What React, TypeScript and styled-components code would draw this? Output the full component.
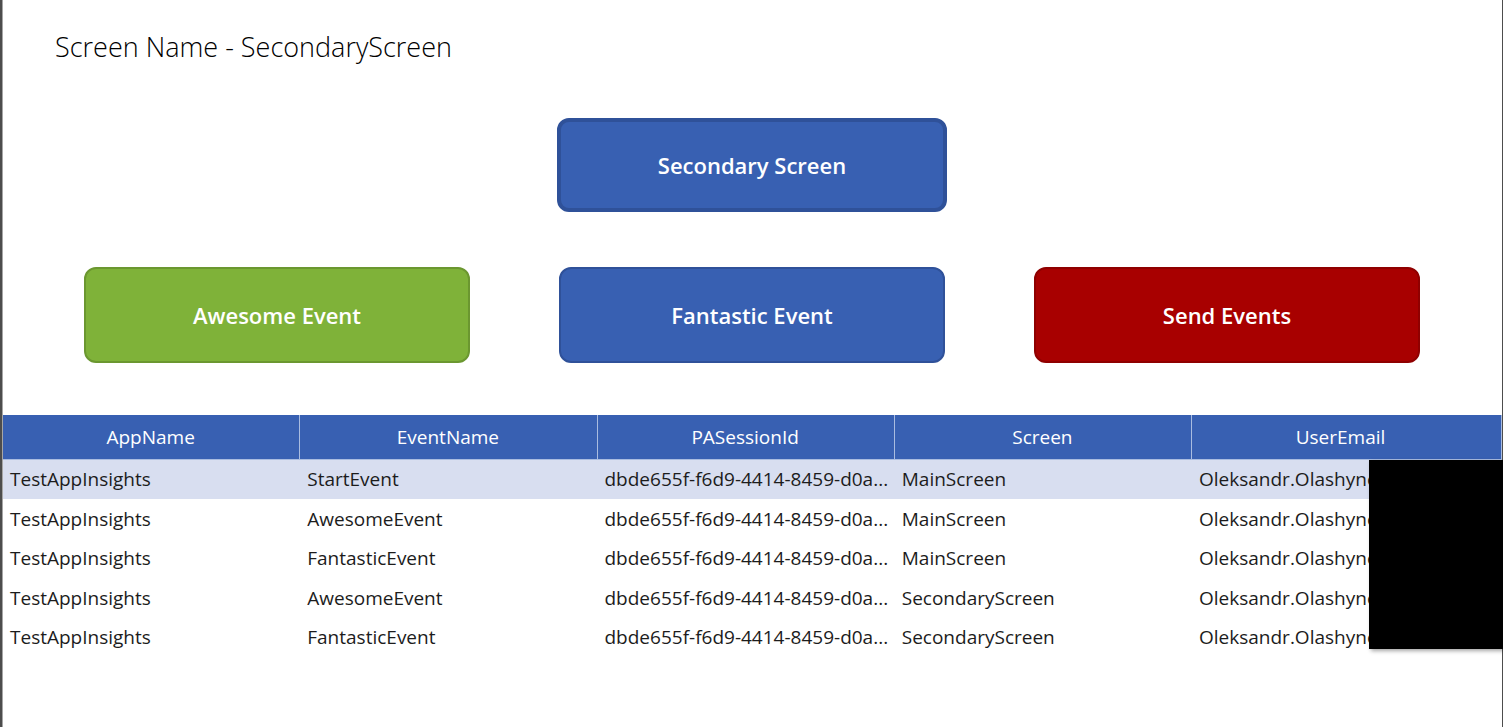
import React from "react";
import styled, { createGlobalStyle, css } from "styled-components";

const GlobalStyle = createGlobalStyle`
  *, *::before, *::after { box-sizing: border-box; }
  body { margin: 0; background: #fff; }
`;

const Screen = styled.main`
  min-height: 100vh;
  border-left: 2px solid #4d4d4d;
  border-right: 1px solid #4d4d4d;
  padding-left: 1px;
  background: #fff;
  box-shadow: inset 1px 0 0 #a6a6a6;
  color: #1c1c1c;
  font-family: "Open Sans", sans-serif;
`;

const Title = styled.h1`
  margin: 0;
  padding: 29px 52px 0;
  color: #000;
  font-size: 27px;
  line-height: 36px;
  font-weight: 300;
`;

const Actions = styled.section`
  padding: 53px 82px 52px 81px;
`;

const PrimaryRow = styled.div`
  display: flex;
  justify-content: center;
  margin-bottom: 55px;
`;

const EventRow = styled.div`
  display: grid;
  grid-template-columns: repeat(3, 1fr);
  column-gap: 89px;
`;

const tones = {
  blue: { fill: "#3860b2", edge: "#2f5199" },
  green: { fill: "#7fb239", edge: "#6b9730" },
  red: { fill: "#a80000", edge: "#8f0000" },
};

const ActionButton = styled.button<{ $tone: keyof typeof tones; $focused?: boolean }>`
  height: 96px;
  padding: 0;
  border: 2px solid ${({ $tone }) => tones[$tone].edge};
  border-radius: 12px;
  background: ${({ $tone }) => tones[$tone].fill};
  color: #fff;
  font-family: inherit;
  font-size: 22px;
  line-height: 30px;
  font-weight: 600;
  cursor: pointer;
  ${({ $focused }) =>
    $focused &&
    css`
      width: 390px;
      max-width: 100%;
      height: 94px;
      border-width: 4px;
    `}
`;

const TableArea = styled.section`
  position: relative;
`;

const Table = styled.table`
  width: 100%;
  table-layout: fixed;
  border-collapse: separate;
  border-spacing: 0;
  font-size: 19px;
  line-height: 26px;
`;

const HeaderCell = styled.th`
  width: 19.83%;
  height: 45px;
  padding: 0 1px 0 0;
  border-right: 1px solid #a9bce0;
  border-bottom: 1px solid #a9bce0;
  background: #3860b2;
  color: #fff;
  font-weight: 400;

  &:last-child {
    width: auto;
    padding-right: 12px;
  }
`;

const Row = styled.tr<{ $selected?: boolean }>`
  height: 39px;
  background: ${({ $selected }) => ($selected ? "#d8def0" : "transparent")};

  &:nth-child(even) {
    height: 40px;
  }
`;

const Cell = styled.td`
  padding: 0 6px 1px 7px;
  overflow: hidden;
  text-overflow: ellipsis;
  white-space: nowrap;
`;

const Redaction = styled.div`
  position: absolute;
  top: 45px;
  right: -1px;
  width: 134px;
  height: 189px;
  background: #000;
  box-shadow: 2px 2px 4px rgba(0, 0, 0, 0.35);
`;

const columns = ["AppName", "EventName", "PASessionId", "Screen", "UserEmail"];
const session = "dbde655f-f6d9-4414-8459-d0a...";
const email = "Oleksandr.Olashync";
const events = [
  ["StartEvent", "MainScreen"],
  ["AwesomeEvent", "MainScreen"],
  ["FantasticEvent", "MainScreen"],
  ["AwesomeEvent", "SecondaryScreen"],
  ["FantasticEvent", "SecondaryScreen"],
];

export default function App() {
  return (
    <>
      <GlobalStyle />
      <Screen>
        <Title>Screen Name - SecondaryScreen</Title>
        <Actions>
          <PrimaryRow>
            <ActionButton type="button" $tone="blue" $focused>Secondary Screen</ActionButton>
          </PrimaryRow>
          <EventRow>
            <ActionButton type="button" $tone="green">Awesome Event</ActionButton>
            <ActionButton type="button" $tone="blue">Fantastic Event</ActionButton>
            <ActionButton type="button" $tone="red">Send Events</ActionButton>
          </EventRow>
        </Actions>
        <TableArea>
          <Table>
            <thead>
              <tr>
                {columns.map((name) => (
                  <HeaderCell key={name} scope="col">{name}</HeaderCell>
                ))}
              </tr>
            </thead>
            <tbody>
              {events.map(([event, screen], index) => (
                <Row key={index} $selected={index === 0}>
                  <Cell>TestAppInsights</Cell>
                  <Cell>{event}</Cell>
                  <Cell>{session}</Cell>
                  <Cell>{screen}</Cell>
                  <Cell>{email}</Cell>
                </Row>
              ))}
            </tbody>
          </Table>
          <Redaction />
        </TableArea>
      </Screen>
    </>
  );
}
